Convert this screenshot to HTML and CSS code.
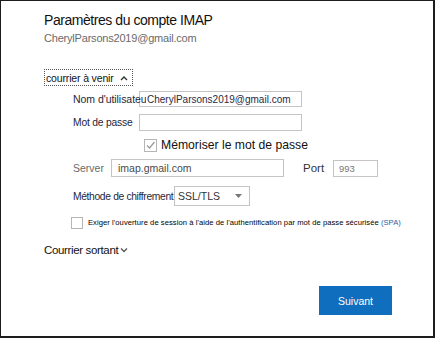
FILE: index.html
```html
<!DOCTYPE html>
<html lang="fr">
<head>
<meta charset="utf-8">
<link rel="stylesheet" href="styles.css">
</head>
<body>
<div class="frame">
  <div class="title">Paramètres du compte IMAP</div>
  <div class="email">CherylParsons2019@gmail.com</div>
  <div class="section-toggle"><span>courrier à venir</span><svg class="chev" width="8" height="6" viewBox="0 0 8 6"><path d="M1 5 L4 2 L7 5" fill="none" stroke="#333" stroke-width="1.4"/></svg></div>
  <div class="row row-user">
    <div class="label lbl-dark lbl-over">Nom d'utilisateur</div>
    <div class="field field-wide">CherylParsons2019@gmail.com</div>
  </div>
  <div class="row row-pass">
    <div class="label lbl-dark">Mot de passe</div>
    <div class="field field-wide"></div>
  </div>
  <div class="row row-remember">
    <div class="check checked"><svg width="11" height="11" viewBox="0 0 11 11"><path d="M2 5.5 L4.5 8 L9.5 2" fill="none" stroke="#9a9a9a" stroke-width="1.3"/></svg></div>
    <div class="remember-text">Mémoriser le mot de passe</div>
  </div>
  <div class="row row-server">
    <div class="label lbl-gray lbl-server">Server</div>
    <div class="field field-server">imap.gmail.com</div>
    <div class="label lbl-gray lbl-port">Port</div>
    <div class="field field-port">993</div>
  </div>
  <div class="row row-enc">
    <div class="label lbl-dark lbl-enc">Méthode de chiffrement</div>
    <div class="select"><span>SSL/TLS</span><svg width="7" height="4" viewBox="0 0 7 4"><path d="M0 0 H7 L3.5 4 Z" fill="#777"/></svg></div>
  </div>
  <div class="row row-spa">
    <div class="check"></div>
    <div class="spa-text">Exiger l'ouverture de session à l'aide de l'authentification par mot de passe sécurisée <span class="spa">(SPA)</span></div>
  </div>
  <div class="outgoing"><span>Courrier sortant</span><svg class="chev" width="8" height="6" viewBox="0 0 8 6"><path d="M1 1.5 L4 4.5 L7 1.5" fill="none" stroke="#555" stroke-width="1.3"/></svg></div>
  <div class="actions"><div class="btn">Suivant</div></div>
</div>
</body>
</html>
```
FILE: styles.css
```css
html, body {
  margin: 0;
  padding: 0;
  background: #fff;
}
.frame {
  width: 435px;
  height: 338px;
  box-sizing: border-box;
  border-style: solid;
  border-color: #1c1c1c;
  border-width: 1px 2px 2px 1px;
  padding: 10px 0 0 43px;
  font-family: "Liberation Sans", Arial, sans-serif;
  color: #111;
}
.title {
  font-size: 14px;
  letter-spacing: -0.45px;
  line-height: 18px;
  color: #111;
}
.email {
  font-size: 11px;
  letter-spacing: -0.2px;
  line-height: 14px;
  color: #6a6a6a;
  margin-top: 2px;
}
.section-toggle {
  margin-top: 24px;
  width: 89px;
  height: 17px;
  box-sizing: border-box;
  border: 1px dotted #555;
  display: flex;
  align-items: center;
  gap: 6px;
  font-size: 10.5px;
  letter-spacing: -0.15px;
  white-space: nowrap;
  padding-left: 1px;
}
.row {
  display: flex;
  align-items: center;
}
.label {
  font-size: 10.3px;
  letter-spacing: -0.2px;
  white-space: nowrap;
  flex: none;
}
.lbl-dark { color: #1f1f3a; }
.lbl-gray { color: #6a6a6a; font-size: 10.5px; letter-spacing: 0; }
.row-user { margin-top: 5px; height: 16px; padding-left: 29px; }
.row-pass .label { width: 66px; }
.row-user .lbl-over {
  width: 73px;
  font-size: 10.5px;
  letter-spacing: -0.05px;
  overflow: hidden;
  margin-right: -7px;
  position: relative;
  z-index: 1;
}
.row-user .field { padding-left: 7px; }
.field {
  flex: none;
  box-sizing: border-box;
  border: 1px solid #c4c4c4;
  background: #fff;
  font-size: 10px;
  color: #2a2a44;
  display: flex;
  align-items: center;
  padding-left: 6px;
  white-space: nowrap;
  overflow: hidden;
}
.field-wide { width: 163px; height: 16px; }
.row-pass { margin-top: 7px; height: 17px; padding-left: 29px; }
.row-pass .field { height: 17px; }
.row-remember { margin-top: 7px; height: 14px; padding-left: 100px; }
.check {
  width: 13px;
  height: 13px;
  box-sizing: border-box;
  border: 1px solid #b5b5b5;
  background: #fff;
  flex: none;
  display: flex;
  align-items: center;
  justify-content: center;
}
.remember-text {
  margin-left: 4px;
  font-size: 12.2px;
  color: #111;
}
.row-server { margin-top: 7px; height: 18px; padding-left: 29px; }
.lbl-server { width: 38px; }
.field-server { width: 173px; height: 18px; padding-left: 6px; color: #4a4a4a; font-size: 10.5px; }
.lbl-port { margin-left: 19px; width: 30px; font-size: 11.5px; color: #333; }
.field-port { width: 45px; height: 17px; padding-left: 5px; font-size: 9.5px; color: #777; }
.row-enc { margin-top: 9px; height: 20px; padding-left: 29px; }
.lbl-enc { width: 101px; letter-spacing: -0.35px; }
.select {
  flex: none;
  width: 76px;
  height: 20px;
  box-sizing: border-box;
  border: 1px solid #c4c4c4;
  background: #fff;
  display: flex;
  align-items: center;
  justify-content: space-between;
  padding: 0 7px 0 3px;
  font-size: 10.5px;
  color: #333;
}
.row-spa { margin-top: 10px; height: 13px; padding-left: 27px; }
.row-spa .check { width: 12px; height: 12px; }
.spa-text {
  margin-left: 5px;
  font-size: 7.6px;
  letter-spacing: 0.06px;
  color: #000;
  white-space: nowrap;
}
.spa { color: #3060a0; }
.outgoing {
  margin-top: 14px;
  display: flex;
  align-items: center;
  gap: 2px;
  font-size: 11.5px;
  letter-spacing: -0.35px;
  color: #111;
  height: 14px;
}
.actions {
  display: flex;
  justify-content: flex-end;
  margin-top: 29px;
  padding-right: 41px;
}
.btn {
  width: 73px;
  height: 29px;
  background: #106ebe;
  color: #fff;
  font-size: 10.5px;
  display: flex;
  align-items: center;
  justify-content: center;
}
```
